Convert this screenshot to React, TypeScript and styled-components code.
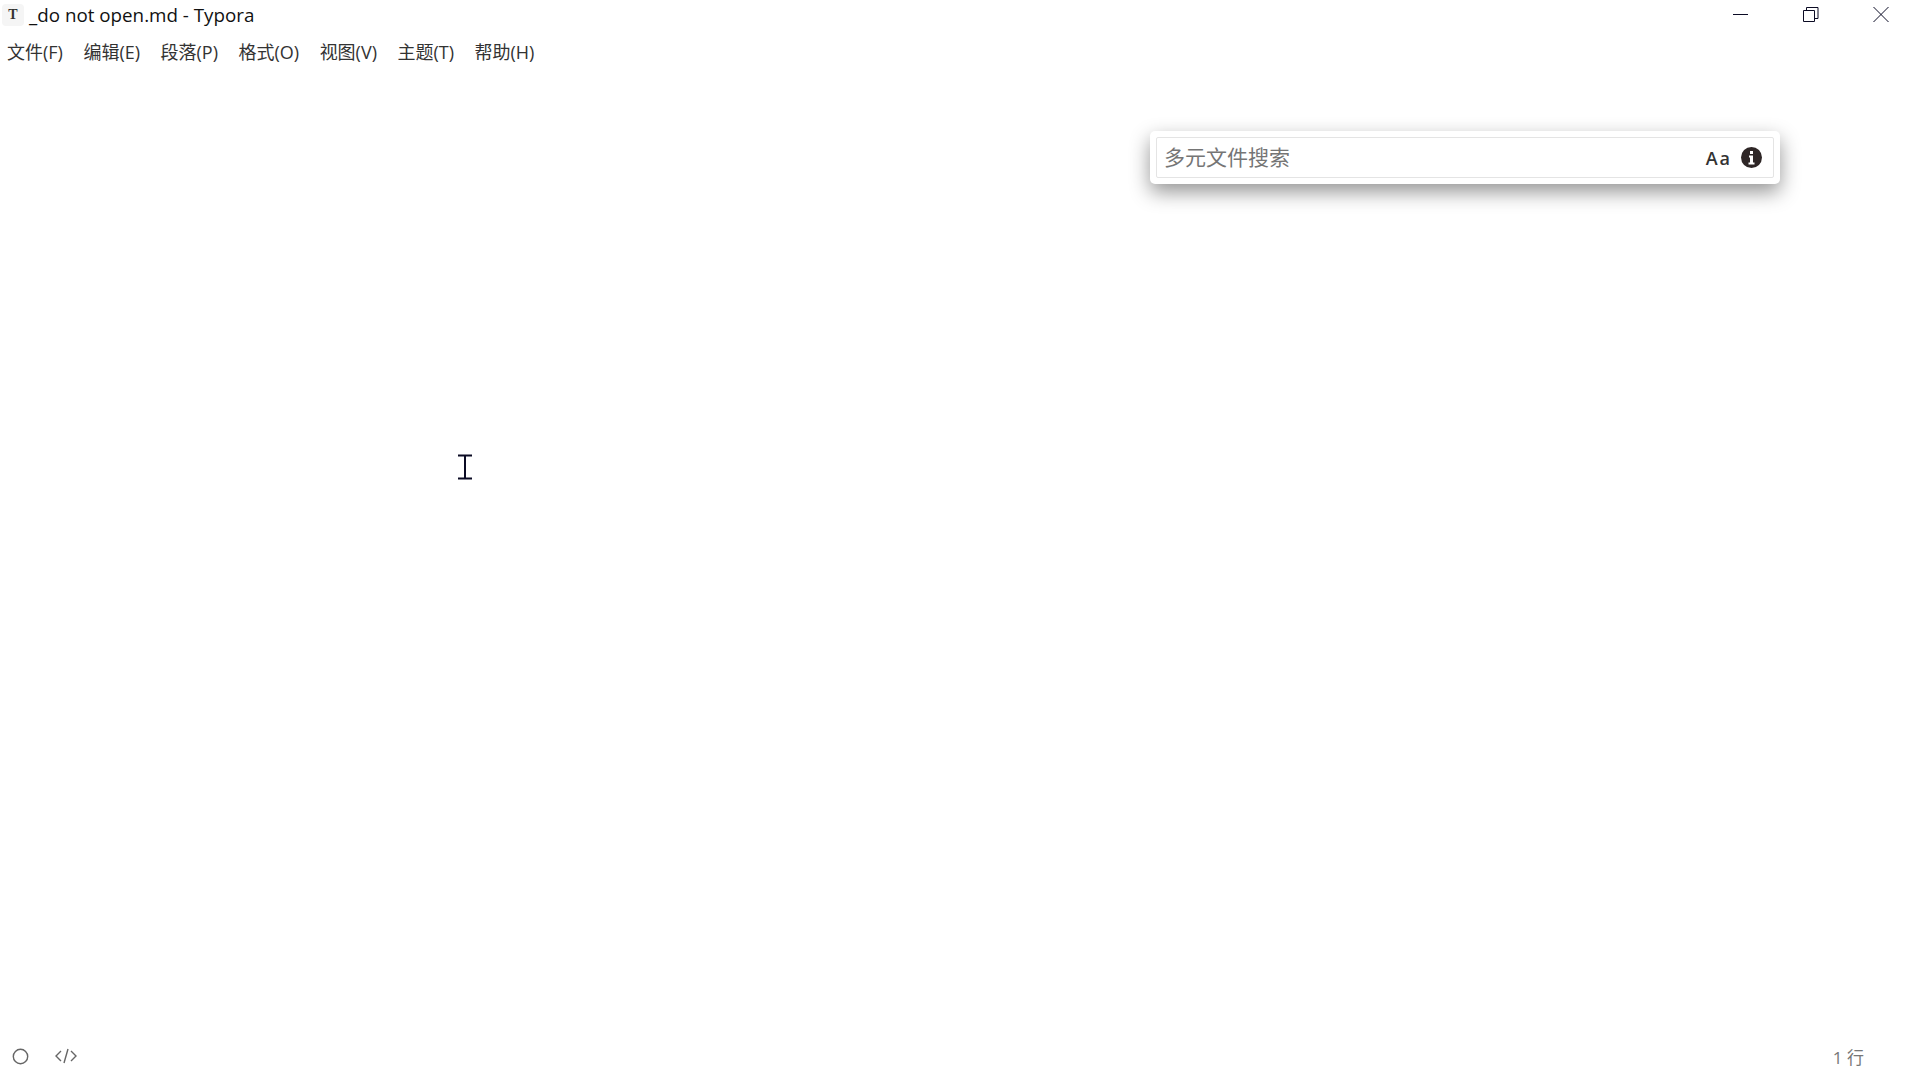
import React from "react"
import styled, { createGlobalStyle } from "styled-components"

const Global = createGlobalStyle`
  html, body { margin: 0; padding: 0; background: #fff; }
  body { font-family: "Open Sans", "Noto Sans CJK SC", sans-serif; }
`

const Window = styled.div`
  position: relative;
  width: 1916px;
  height: 1076px;
  display: flex;
  flex-direction: column;
  overflow: hidden;
  background: #fff;
`

const TitleBar = styled.header`
  height: 30px;
  display: flex;
  align-items: center;
  justify-content: space-between;
`

const TitleLeft = styled.div`
  display: flex;
  align-items: center;
  padding-left: 2px;
`

const AppIcon = styled.div`
  width: 22px;
  height: 22px;
  border-radius: 4px;
  background: #f5f5f5;
  display: flex;
  align-items: center;
  justify-content: center;
  font: bold 14px "Liberation Serif", serif;
  color: #333;
`

const TitleText = styled.span`
  margin-left: 5px;
  font: 18.8px "Open Sans", sans-serif;
  color: #111;
`

const WinButtons = styled.div`
  display: flex;
`

const WinButton = styled.div`
  width: 70px;
  height: 30px;
  display: flex;
  align-items: center;
  justify-content: center;
  color: #0b0b24;
`

const MenuBar = styled.nav`
  height: 41px;
  display: flex;
  align-items: center;
  gap: 20.5px;
  padding: 0 0 0 7px;
`

const MenuItem = styled.span`
  font: 18px "Open Sans", "Noto Sans CJK SC", sans-serif;
  color: #333;
`

const Editor = styled.main`
  flex: 1;
  position: relative;
`

const SearchPanel = styled.div`
  position: absolute;
  left: 1150px;
  top: 60px;
  width: 618px;
  height: 41px;
  padding: 6px;
  background: #fff;
  border-radius: 5px;
  box-shadow: 0 8px 20px rgba(0, 0, 0, 0.42);
  display: flex;
`

const SearchField = styled.div`
  flex: 1;
  display: flex;
  align-items: center;
  border: 1px solid #e4e4e4;
  border-radius: 2px;
  padding: 0 11px 0 7px;
`

const SearchPlaceholder = styled.span`
  flex: 1;
  font: 21px "Noto Sans CJK SC", sans-serif;
  color: #757575;
  position: relative;
  top: -2px;
`

const CaseToggle = styled.span`
  font: 600 18px "Open Sans", sans-serif;
  letter-spacing: 2px;
  color: #333;
  margin-right: 9px;
`

const Caret = styled.svg`
  position: absolute;
  left: 457px;
  top: 383px;
`

const StatusBar = styled.footer`
  height: 40px;
  display: flex;
  align-items: center;
  justify-content: space-between;
  padding: 0 52px 0 12px;
  color: #666;
`

const StatusLeft = styled.div`
  display: flex;
  align-items: center;
  gap: 26px;
`

const LineCount = styled.span`
  font: 17px "Open Sans", "Noto Sans CJK SC", sans-serif;
  color: #777;
`

const menus = ["文件(F)", "编辑(E)", "段落(P)", "格式(O)", "视图(V)", "主题(T)", "帮助(H)"]

export default function App() {
  return (
    <Window>
      <Global />
      <TitleBar>
        <TitleLeft>
          <AppIcon>T</AppIcon>
          <TitleText>_do not open.md - Typora</TitleText>
        </TitleLeft>
        <WinButtons>
          <WinButton>
            <svg width="16" height="16" viewBox="0 0 16 16">
              <path d="M0 7.5h15" stroke="currentColor" fill="none" />
            </svg>
          </WinButton>
          <WinButton>
            <svg width="16" height="16" viewBox="0 0 16 16">
              <path d="M.5 3.5h11v11H.5zM3.5 3.5v-3h11.5v11h-3.5" stroke="currentColor" fill="none" />
            </svg>
          </WinButton>
          <WinButton>
            <svg width="16" height="16" viewBox="0 0 16 16">
              <path d="M.5 0l15 15M15.5 0l-15 15" stroke="currentColor" fill="none" />
            </svg>
          </WinButton>
        </WinButtons>
      </TitleBar>
      <MenuBar>
        {menus.map((m) => (
          <MenuItem key={m}>{m}</MenuItem>
        ))}
      </MenuBar>
      <Editor>
        <SearchPanel>
          <SearchField>
            <SearchPlaceholder>多元文件搜索</SearchPlaceholder>
            <CaseToggle>Aa</CaseToggle>
            <svg width="21" height="21" viewBox="0 0 21 21">
              <circle cx="10.5" cy="10.5" r="10.5" fill="#2e2626" />
              <rect x="9" y="4" width="3" height="3" fill="#fff" />
              <path d="M8 8.5h4v7h1.5v2h-6v-2H9v-5H8z" fill="#fff" />
            </svg>
          </SearchField>
        </SearchPanel>
        <Caret width="16" height="26" viewBox="0 0 16 26">
          <path d="M1 1.5h14M1 24.5h14M8 1.5v23" stroke="#0b0b24" strokeWidth="2" fill="none" />
        </Caret>
      </Editor>
      <StatusBar>
        <StatusLeft>
          <svg width="17" height="17" viewBox="0 0 17 17">
            <circle cx="8.5" cy="8.5" r="7.2" stroke="#666" strokeWidth="1.4" fill="none" />
          </svg>
          <svg width="22" height="16" viewBox="0 0 22 16">
            <path d="M6 3L1 8l5 5M16 3l5 5-5 5M13 1L9 15" stroke="#666" strokeWidth="1.4" fill="none" />
          </svg>
        </StatusLeft>
        <LineCount>1 行</LineCount>
      </StatusBar>
    </Window>
  )
}
